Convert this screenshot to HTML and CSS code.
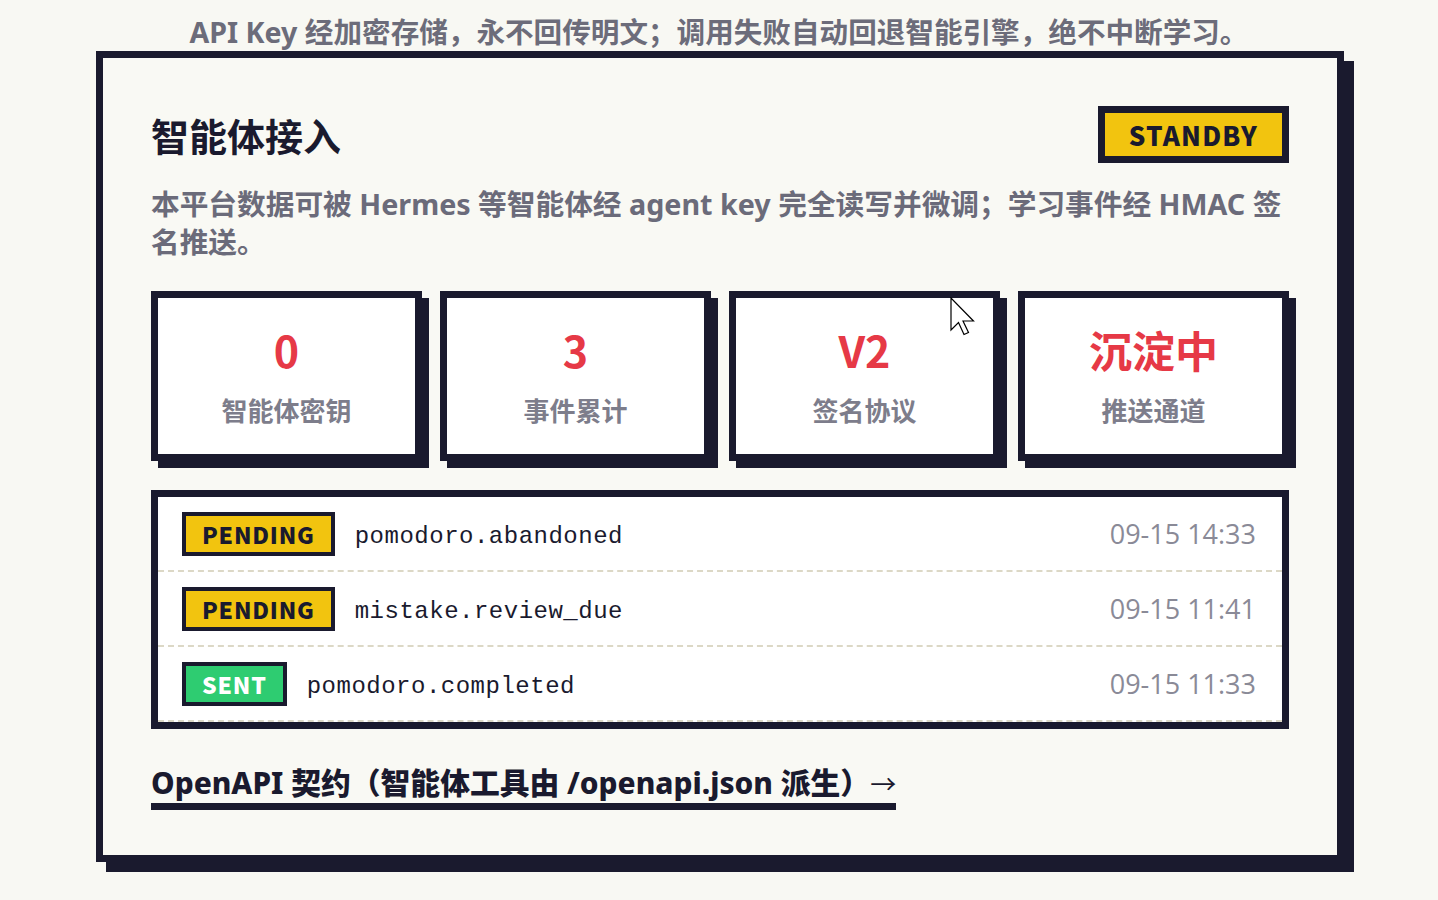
FILE: index.html
```html
<!DOCTYPE html>
<html lang="zh-CN">
<head>
<meta charset="utf-8">
<title>智能体接入</title>
<link rel="stylesheet" href="styles.css">
</head>
<body>
<p class="note">API Key 经加密存储，永不回传明文；调用失败自动回退智能引擎，绝不中断学习。</p>
<section class="panel">
  <header class="panel-head">
    <h2 class="panel-title">智能体接入</h2>
    <span class="state-badge">STANDBY</span>
  </header>
  <p class="panel-desc">本平台数据可被 Hermes 等智能体经 agent key 完全读写并微调；学习事件经 HMAC 签名推送。</p>
  <div class="stats">
    <div class="stat"><div class="stat-value">0</div><div class="stat-label">智能体密钥</div></div>
    <div class="stat"><div class="stat-value">3</div><div class="stat-label">事件累计</div></div>
    <div class="stat"><div class="stat-value">V2</div><div class="stat-label">签名协议</div></div>
    <div class="stat"><div class="stat-value">沉淀中</div><div class="stat-label">推送通道</div></div>
  </div>
  <ul class="events">
    <li class="event"><span class="tag tag-pending">PENDING</span><span class="event-name">pomodoro.abandoned</span><span class="event-time">09-15 14:33</span></li>
    <li class="event"><span class="tag tag-pending">PENDING</span><span class="event-name">mistake.review_due</span><span class="event-time">09-15 11:41</span></li>
    <li class="event"><span class="tag tag-sent">SENT</span><span class="event-name">pomodoro.completed</span><span class="event-time">09-15 11:33</span></li>
  </ul>
  <a class="api-link" href="#">OpenAPI 契约（智能体工具由 /openapi.json 派生）<span class="arrow">→</span></a>
</section>
<svg class="cursor" width="26" height="40" viewBox="0 0 26 40" aria-hidden="true">
  <path d="M1 1 L1 33 L8.5 25.5 L14 37.5 L18.5 35.5 L13 24 L23.5 24 Z" fill="#fff" stroke="#000" stroke-width="1.2" stroke-linejoin="miter"/>
</svg>
</body>
</html>
```
FILE: styles.css
```css
* { box-sizing: border-box; }

html, body {
  margin: 0;
  padding: 0;
  background: #f8f8f3;
}

body {
  font-family: "Noto Sans", "Noto Sans CJK SC", sans-serif;
  color: #1a1a2e;
  position: relative;
  min-height: 900px;
}

.note {
  margin: 0;
  padding-top: 13px;
  line-height: 38px;
  text-align: center;
  font-size: 28.6px;
  font-weight: 700;
  color: #6c6c7a;
}

.panel {
  width: 1248px;
  margin: 0 0 0 96px;
  border: 7px solid #1a1a2e;
  box-shadow: 10px 10px 0 #1a1a2e;
  background: #f9f9f4;
  padding: 48px 48px 45px;
}

.panel-head {
  display: flex;
  justify-content: space-between;
  align-items: center;
}

.panel-title {
  margin: 0;
  font-size: 38px;
  line-height: 50px;
  font-weight: 700;
  font-family: "Noto Sans CJK SC", sans-serif;
  color: #1a1a2e;
}

.state-badge {
  display: inline-block;
  border: 7px solid #1a1a2e;
  background: #f2c40f;
  height: 57px;
  line-height: 43px;
  padding: 0 24px;
  font-family: "Noto Sans CJK SC", sans-serif;
  font-weight: 900;
  font-size: 26px;
  letter-spacing: 1.2px;
  color: #1a1a2e;
}

.panel-desc {
  margin: 22px 0 0;
  font-size: 28.7px;
  line-height: 38px;
  font-weight: 700;
  color: #6b6b7a;
}

.stats {
  margin-top: 30px;
  display: grid;
  grid-template-columns: repeat(4, 1fr);
  gap: 18px;
}

.stat {
  background: #fff;
  border: 7px solid #1a1a2e;
  box-shadow: 7px 7px 0 #1a1a2e;
  height: 170px;
  display: flex;
  flex-direction: column;
  align-items: center;
  justify-content: flex-start;
  gap: 19px;
  padding-top: 26px;
}

.stat-value {
  font-family: "Noto Sans CJK SC", sans-serif;
  font-size: 43px;
  line-height: 50px;
  font-weight: 700;
  color: #e63946;
}

.stat-label {
  font-family: "Noto Sans CJK SC", sans-serif;
  font-size: 26px;
  line-height: 34px;
  font-weight: 700;
  color: #7d7d8b;
}

.events {
  list-style: none;
  margin: 29px 0 0;
  padding: 0;
  background: #fff;
  border: 7px solid #1a1a2e;
}

.event {
  display: flex;
  align-items: center;
  height: 75px;
  padding: 0 26px 0 24px;
  border-bottom: 2px dashed #dcd8c6;
}

.tag {
  display: inline-block;
  height: 44px;
  line-height: 36px;
  border: 4px solid #1a1a2e;
  padding: 0 16px;
  font-family: "Noto Sans CJK SC", sans-serif;
  font-weight: 900;
  font-size: 23px;
  letter-spacing: 0.8px;
}

.tag-pending {
  background: #f2c40f;
  color: #1a1a2e;
}

.tag-sent {
  background: #2ecc71;
  color: #fff;
}

.event-name {
  margin-left: 20px;
  margin-top: 6px;
  font-family: "Liberation Mono", monospace;
  font-size: 24px;
  letter-spacing: 0.5px;
  color: #1a1a2e;
}

.event-time {
  margin-left: auto;
  font-family: "Open Sans", "Noto Sans", sans-serif;
  font-size: 27px;
  color: #8a8a97;
}

.api-link {
  display: inline-block;
  margin-top: 35px;
  font-family: "Noto Sans", "Noto Sans CJK SC", sans-serif;
  font-size: 29.8px;
  line-height: 38px;
  font-weight: 800;
  color: #1a1a2e;
  text-decoration: none;
  border-bottom: 7px solid #1a1a2e;
}

.arrow {
  font-weight: 400;
  font-size: 26px;
}

.cursor {
  position: absolute;
  left: 950px;
  top: 297px;
}
```
